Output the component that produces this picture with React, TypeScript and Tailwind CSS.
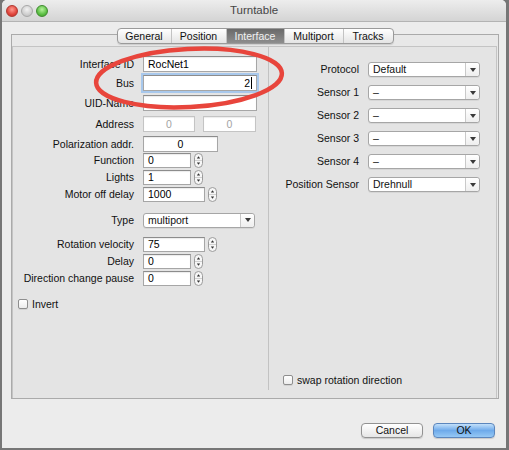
import React from 'react'

type Align = 'left' | 'center' | 'right'

const Field: React.FC<{ className: string; value?: string; align?: Align; disabled?: boolean; focused?: boolean }> = ({
  className,
  value = '',
  align = 'left',
  disabled,
  focused,
}) => {
  const justify = align === 'center' ? 'justify-center' : align === 'right' ? 'justify-end' : 'justify-start'
  return (
    <div
      className={`flex items-center bg-white px-[4px] border ${justify} ${
        disabled ? 'border-[#c4c4c4] text-[#a3a3a3]' : 'border-[#a6a6a6] border-t-[#8c8c8c] text-black'
      } ${focused ? 'border-[#5d8fcf] shadow-[0_0_0_2px_#a8c8ec]' : 'shadow-[inset_0_1px_1px_rgba(0,0,0,0.08)]'} ${className}`}
    >
      <span>{value}</span>
      {focused && <span className="ml-[1px] w-px h-[12px] bg-black" />}
    </div>
  )
}

const Stepper: React.FC = () => (
  <svg width="9" height="15" viewBox="0 0 9 15" className="ml-[3px]">
    <rect x="0.5" y="0.5" width="8" height="14" rx="4" fill="#f6f6f6" stroke="#9b9b9b" />
    <line x1="1" y1="7.5" x2="8" y2="7.5" stroke="#d0d0d0" />
    <path d="M4.5 3.2 L6.2 5.6 H2.8Z" fill="#333" />
    <path d="M4.5 11.8 L6.2 9.4 H2.8Z" fill="#333" />
  </svg>
)

const Popup: React.FC<{ value: string }> = ({ value }) => (
  <div className="flex items-stretch w-[112px] h-[15px] bg-white border border-[#a6a6a6] rounded-[3px] shadow-[0_1px_0_rgba(0,0,0,0.06)]">
    <span className="flex-1 flex items-center pl-[4px]">{value}</span>
    <span className="w-[14px] flex items-center justify-center border-l border-[#c9c9c9] bg-gradient-to-b from-white to-[#eeeeee] rounded-r-[3px]">
      <svg width="6" height="4" viewBox="0 0 6 4">
        <path d="M0 0 H6 L3 4Z" fill="#3a3a3a" />
      </svg>
    </span>
  </div>
)

const Checkbox: React.FC = () => (
  <span className="w-[10px] h-[10px] rounded-[2px] border border-[#8e8e8e] bg-gradient-to-b from-white to-[#ececec] shadow-[0_1px_0_rgba(0,0,0,0.08)]" />
)

const Row: React.FC<{ label: string; className: string; children: React.ReactNode }> = ({ label, className, children }) => (
  <div className={`flex items-center ${className}`}>
    <span className="w-[121px] text-right">{label}</span>
    <div className="ml-[9px] flex items-center h-full">{children}</div>
  </div>
)

const tabs = [
  { name: 'General', w: 'w-[53px]' },
  { name: 'Position', w: 'w-[55px]' },
  { name: 'Interface', w: 'w-[58px]', active: true },
  { name: 'Multiport', w: 'w-[59px]' },
  { name: 'Tracks', w: 'w-[50px]' },
]

const sensors = [
  { label: 'Protocol', value: 'Default' },
  { label: 'Sensor 1', value: '–' },
  { label: 'Sensor 2', value: '–' },
  { label: 'Sensor 3', value: '–' },
  { label: 'Sensor 4', value: '–' },
  { label: 'Position Sensor', value: 'Drehnull' },
]

export default function App() {
  return (
    <div className="relative w-[509px] h-[450px] overflow-hidden bg-[#767676] text-[10.5px] leading-none text-[#111] font-['Lucida_Grande','Liberation_Sans',Arial,sans-serif]">
      <div className="ml-[2px] w-[504px] h-[448px] bg-[#ececec] rounded-t-[5px] flex flex-col overflow-hidden">
        {/* Title bar */}
        <div className="relative h-[22px] flex items-center bg-gradient-to-b from-[#ededed] to-[#d4d4d4] border-b border-[#b3b3b3]">
          <div className="flex gap-[3px] pl-[4px]">
            <span className="w-[12px] h-[12px] rounded-full border border-[#b0372f] bg-[radial-gradient(circle_at_50%_35%,#ff9a8f,#e0443b_60%,#b8322a)]" />
            <span className="w-[12px] h-[12px] rounded-full border border-[#a8a8a8] bg-[radial-gradient(circle_at_50%_35%,#f2f2f2,#cfcfcf_60%,#b7b7b7)]" />
            <span className="w-[12px] h-[12px] rounded-full border border-[#3f8a2f] bg-[radial-gradient(circle_at_50%_35%,#b6f29c,#5cbf44_60%,#3e9a2d)]" />
          </div>
          <span className="absolute inset-0 flex items-center justify-center text-[11.5px] text-[#454545]">Turntable</span>
        </div>

        {/* Tab view */}
        <div className="ml-[9px] w-[488px] mt-[6px]">
          <div className="relative z-10 flex justify-center">
            <div className="flex h-[16px] rounded-[4px] border border-[#9a9a9a] bg-gradient-to-b from-white to-[#e4e4e4] overflow-hidden shadow-[0_1px_1px_rgba(0,0,0,0.12)]">
              {tabs.map((t, i) => (
                <div
                  key={t.name}
                  className={`${t.w} flex items-center justify-center ${i > 0 ? 'border-l border-[#c3c3c3]' : ''} ${
                    t.active ? 'bg-gradient-to-b from-[#6a6a6a] to-[#8e8e8e] text-[#f2f2f2] border-[#6a6a6a]' : ''
                  }`}
                >
                  {t.name}
                </div>
              ))}
            </div>
          </div>
          <div className="-mt-[10px] h-[365px] border border-[#aaaaaa] bg-[#e8e8e8] flex flex-col">
            <div className="mt-[11px] flex-1 mr-[1px] border-t border-x border-[#c4c4c4] bg-[#e4e4e4] flex">
              {/* Left column */}
              <div className="w-[255px] flex flex-col">
                <Row label="Interface ID" className="mt-[9px] h-[16px]">
                  <Field className="w-[114px] h-[16px]" value="RocNet1" />
                </Row>
                <Row label="Bus" className="mt-[3px] h-[16px]">
                  <Field className="w-[114px] h-[16px]" value="2" align="right" focused />
                </Row>
                <Row label="UID-Name" className="mt-[4px] h-[16px]">
                  <Field className="w-[114px] h-[16px]" />
                </Row>
                <Row label="Address" className="mt-[5px] h-[16px]">
                  <Field className="w-[52px] h-[16px]" value="0" align="center" disabled />
                  <Field className="ml-[8px] w-[53px] h-[16px]" value="0" align="center" disabled />
                </Row>
                <Row label="Polarization addr." className="mt-[4px] h-[16px]">
                  <Field className="w-[75px] h-[16px]" value="0" align="center" />
                </Row>
                <Row label="Function" className="mt-[1px] h-[15px]">
                  <Field className="w-[48px] h-[15px]" value="0" />
                  <Stepper />
                </Row>
                <Row label="Lights" className="mt-[2px] h-[15px]">
                  <Field className="w-[48px] h-[15px]" value="1" />
                  <Stepper />
                </Row>
                <Row label="Motor off delay" className="mt-[2px] h-[15px]">
                  <Field className="w-[62px] h-[15px]" value="1000" />
                  <Stepper />
                </Row>
                <Row label="Type" className="mt-[10px] h-[16px]">
                  <Popup value="multiport" />
                </Row>
                <Row label="Rotation velocity" className="mt-[9px] h-[15px]">
                  <Field className="w-[62px] h-[15px]" value="75" />
                  <Stepper />
                </Row>
                <Row label="Delay" className="mt-[2px] h-[15px]">
                  <Field className="w-[48px] h-[15px]" value="0" />
                  <Stepper />
                </Row>
                <Row label="Direction change pause" className="mt-[2px] h-[15px]">
                  <Field className="w-[48px] h-[15px]" value="0" />
                  <Stepper />
                </Row>
                <div className="mt-[13px] ml-[5px] flex items-center gap-[4px] h-[10px]">
                  <Checkbox />
                  <span>Invert</span>
                </div>
              </div>

              {/* Right column */}
              <div className="flex-1 self-start h-[343px] border-l border-[#c2c2c2] flex flex-col">
                {sensors.map((s, i) => (
                  <div key={s.label} className={`flex items-center h-[15px] ${i === 0 ? 'mt-[15px]' : 'mt-[8px]'}`}>
                    <span className="w-[90px] text-right">{s.label}</span>
                    <div className="ml-[9px]">
                      <Popup value={s.value} />
                    </div>
                  </div>
                ))}
                <div className="mt-auto mb-[5px] ml-[14px] flex items-center gap-[4px] h-[10px]">
                  <Checkbox />
                  <span>swap rotation direction</span>
                </div>
              </div>
            </div>
          </div>
        </div>

        {/* Buttons */}
        <div className="mt-[24px] flex justify-end gap-[10px] pr-[11px]">
          <button className="w-[62px] h-[15px] rounded-[4px] border border-[#929292] bg-gradient-to-b from-white to-[#e6e6e6] shadow-[0_1px_1px_rgba(0,0,0,0.15)] flex items-center justify-center">
            Cancel
          </button>
          <button className="w-[62px] h-[15px] rounded-[4px] border border-[#5b86bd] bg-gradient-to-b from-[#c3e0fa] via-[#6eaaea] to-[#95c8f5] shadow-[0_1px_1px_rgba(0,0,0,0.15)] flex items-center justify-center">
            OK
          </button>
        </div>
      </div>

      {/* Red annotation ellipse */}
      <svg className="absolute inset-0 pointer-events-none" width="509" height="450" viewBox="0 0 509 450">
        <ellipse
          cx="189"
          cy="78"
          rx="93"
          ry="29"
          transform="rotate(-3 189 78)"
          fill="none"
          stroke="#e8453c"
          strokeWidth="4.5"
        />
      </svg>
    </div>
  )
}
